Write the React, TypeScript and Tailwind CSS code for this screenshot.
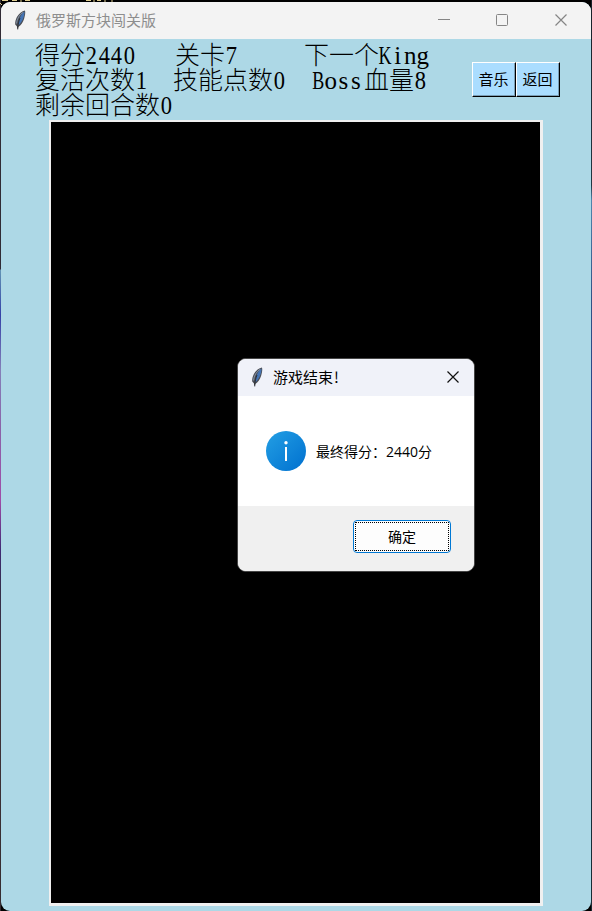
import React from "react";

const sans = "font-['Noto_Sans_CJK_SC',sans-serif]";

function Feather({ className }: { className?: string }) {
  return (
    <svg viewBox="0 0 14 20" className={className}>
      <path d="M12 .4C9 1 5.800 3.400 3.900 7 2.600 9.600 2 12 2.200 14.500L4 16.500 4.300 19.600 5.200 19.500 5.300 17C8 15.500 10.300 12 11.200 8.500 12 5.500 12.600 2.500 12 .4Z" fill="#4b4e55" />
      <path d="M11.500 1.500C9 3.300 7 6.500 6.200 10L4.900 15.500C7.600 13.800 9.600 10.500 10.500 7.500 11.300 4.800 11.700 3 11.500 1.500Z" fill="#4474b4" />
      <path d="M10.300 2.200C6.500 4.500 4 8.500 3.500 13.500" fill="none" stroke="#8493a8" strokeWidth="1" />
      <path d="M7 8C5.800 11 5.100 14 4.700 18.500" fill="none" stroke="#202226" strokeWidth=".8" />
    </svg>
  );
}

/* Digits and Latin words set on half-width cells */
function HalfWidth({ word }: { word: string }) {
  return (
    <span className="inline-flex font-['Liberation_Serif',serif]">
      {word.split("").map((c, i) => (
        <span key={i} className="flex w-[12.5px] justify-center">
          <span className={/[A-Z]/.test(c) ? "block scale-x-[0.72]" : /\d/.test(c) ? "block scale-x-[0.9]" : "block"}>{c}</span>
        </span>
      ))}
    </span>
  );
}

function TkButton({ label }: { label: string }) {
  return (
    <button className={`h-[35px] w-[44px] border border-t-white border-l-white border-r-black border-b-black bg-[#aaddff] ${sans}`}>
      <span className="flex h-full w-full items-center justify-center border-r border-b border-[#7a9db5] pb-px text-[15px] leading-none text-black">
        {label}
      </span>
    </button>
  );
}

export default function App() {
  return (
    <div className="relative h-[911px] w-[592px] overflow-hidden bg-black">
      {/* slivers of the desktop behind the window */}
      <div className="absolute top-0 left-0 h-full w-px bg-[linear-gradient(to_bottom,#302b35_0px,#302b35_269px,#6294b5_270px,#3442a8_315px,#8480b9_370px,#8b62a8_430px,#a04ca8_500px,#402a75_550px,#352d49_590px,#403338_700px,#352b30_911px)]" />
      <div className="absolute top-0 right-0 h-full w-px bg-[linear-gradient(to_bottom,#182028_0px,#203642_185px,#4e86ac_200px,#315285_300px,#28418a_430px,#1d2e60_500px,#183044_600px,#182b34_911px)]" />
      <svg className="absolute top-0 left-0" width="120" height="6">
        <path d="M0 3L2 5M2 .500H8M12 .500H17M21 0V2M25 .500H30M86 .500H91M94 0V2M97 .500H101M105 0V2M112 0V2" stroke="#e0cf92" fill="none" />
      </svg>

      <div className="flex h-full flex-col px-px pt-[2px]">
        <div className="flex flex-1 flex-col overflow-hidden rounded-[9px] bg-[#add8e6]">
          <header className="flex h-[37px] shrink-0 items-center bg-[#f3f3f3] pb-[2px]">
            <Feather className="ml-[12px] h-[20px] w-[14px]" />
            <h1 className={`ml-[9px] pb-px text-[15px] leading-none text-[#8e8e8e] ${sans}`}>俄罗斯方块闯关版</h1>
            <svg className="ml-auto mr-[23px]" width="130" height="14" fill="none" stroke="#858585">
              <path d="M0 6.500H12" />
              <rect x="58.500" y="1.500" width="11" height="11" rx="1" />
              <path d="M117.500 1.500L128.500 12.500M128.500 1.500L117.500 12.500" strokeWidth="1.200" />
            </svg>
          </header>

          <div className="flex h-[81px] shrink-0">
            <div className="w-[437px] pt-[2px] pl-[34px] font-['Noto_Sans_CJK_SC',sans-serif] text-[25px] leading-[25px] font-light whitespace-nowrap text-black">
              <div className="flex h-[25px]">
                <span className="w-[140px]">得分<HalfWidth word="2440" /></span>
                <span className="w-[129px]">关卡<HalfWidth word="7" /></span>
                <span>下一个<HalfWidth word="King" /></span>
              </div>
              <div className="flex h-[25px]">
                <span className="w-[138px]">复活次数<HalfWidth word="1" /></span>
                <span className="w-[139px]">技能点数<HalfWidth word="0" /></span>
                <span><HalfWidth word="Boss" /><span className="ml-[2px]">血量</span><HalfWidth word="8" /></span>
              </div>
              <div className="h-[25px]">剩余回合数<HalfWidth word="0" /></div>
            </div>
            <div className="ml-[34px] flex pt-[23px]">
              <TkButton label="音乐" />
              <TkButton label="返回" />
            </div>
          </div>

          <main className="ml-[48px] h-[786px] w-[494px] shrink-0 border-t-2 border-r-[3px] border-b-[3px] border-l-2 border-[#f0f0f0] bg-black" />
        </div>
      </div>

      <section className="absolute top-[358px] left-[237px] flex h-[214px] w-[238px] flex-col overflow-hidden rounded-[9px] border border-[#454545] bg-white">
        <header className="flex h-[37px] shrink-0 items-center bg-[#f0f2f9] pb-[2px]">
          <Feather className="ml-[12px] h-[20px] w-[14px]" />
          <h2 className={`ml-[9px] pb-px text-[15px] leading-none text-black ${sans}`}>游戏结束<span className="ml-px">!</span></h2>
          <svg className="mr-[14px] ml-auto" width="14" height="14" fill="none" stroke="#111" strokeWidth="1.200">
            <path d="M1.500 1.500L12.500 12.500M12.500 1.500L1.500 12.500" />
          </svg>
        </header>
        <div className="flex h-[110px] shrink-0 items-center pl-[28px]">
          <svg width="40" height="40" viewBox="0 0 40 40">
            <defs>
              <linearGradient id="info" x1="0" y1="0" x2="1" y2="1">
                <stop offset="0" stopColor="#239fe4" />
                <stop offset="1" stopColor="#0070cf" />
              </linearGradient>
            </defs>
            <circle cx="20" cy="20" r="20" fill="url(#info)" />
            <circle cx="20" cy="11.700" r="1.700" fill="#fff" />
            <rect x="19" y="16" width="2" height="14" fill="#fff" />
          </svg>
          <p className="ml-[10px] flex items-baseline text-[14px] leading-none whitespace-nowrap text-black">
            <span className={sans}>最终得分：</span>
            <span className="font-['Open_Sans','Noto_Sans_CJK_SC',sans-serif]">2440分</span>
          </p>
        </div>
        <footer className="flex flex-1 justify-end bg-[#f0f0f0] pt-[14px] pr-[23px]">
          <button className="h-[33px] w-[98px] rounded-[4px] border border-[#0078d4] bg-[#fdfdfd] p-px">
            <span className={`flex h-full w-full items-center justify-center border border-dotted border-black pb-[2px] text-[14px] leading-none text-black ${sans}`}>确定</span>
          </button>
        </footer>
      </section>
    </div>
  );
}
